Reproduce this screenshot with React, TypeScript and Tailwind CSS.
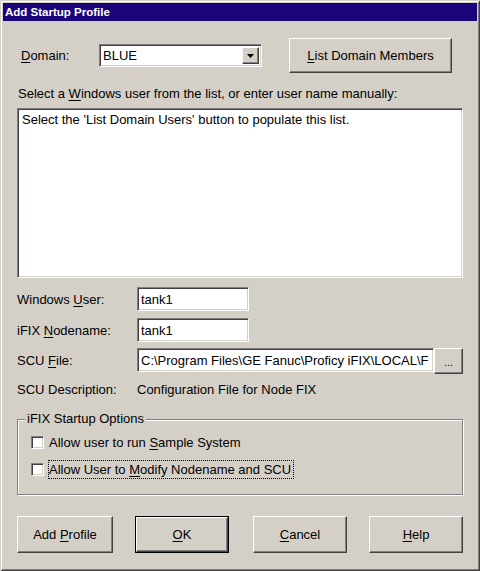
import React from "react";

const sunken =
  "border border-t-[#808080] border-l-[#808080] border-r-white border-b-white shadow-[inset_1px_1px_0_#404040,inset_-1px_-1px_0_#d4d0c8]";
const raised =
  "border border-t-white border-l-white border-r-[#404040] border-b-[#404040] shadow-[inset_-1px_-1px_0_#808080]";

function U({ children }: { children: React.ReactNode }) {
  return <span className="underline underline-offset-[2px]">{children}</span>;
}

function Button({
  children,
  w,
  def,
}: {
  children: React.ReactNode;
  w: string;
  def?: boolean;
}) {
  if (def) {
    return (
      <div className={`${w} h-[37px] border border-black`}>
        <div className={`w-full h-full flex items-center justify-center ${raised}`}>{children}</div>
      </div>
    );
  }
  return (
    <div className={`${w} h-[37px] flex items-center justify-center ${raised}`}>{children}</div>
  );
}

function Check() {
  return <div className={`w-[13px] h-[13px] bg-white shrink-0 ${sunken}`} />;
}

export default function App() {
  return (
    <div className="w-[480px] h-[571px] bg-[#d4d0c8] p-[3px] flex flex-col text-[13px] leading-[15px] text-black font-['Liberation_Sans',Arial,sans-serif] shadow-[inset_1px_1px_0_#d4d0c8,inset_-1px_-1px_0_#404040,inset_2px_2px_0_#ffffff,inset_-2px_-2px_0_#808080]">
      {/* Title bar */}
      <div className="h-[18px] bg-[#1b0479] flex items-center pl-[2px] text-white font-bold text-[11.5px]">
        Add Startup Profile
      </div>

      <div className="px-[14px] flex flex-col">
        {/* Domain row */}
        <div className="mt-[17px] h-[35px] flex items-center">
          <div className="w-[82px] pl-[4px]">
            <U>D</U>omain:
          </div>
          <div className={`w-[163px] h-[23px] bg-white flex items-stretch p-[2px] ${sunken}`}>
            <div className="flex-1 flex items-center pl-[1px]">BLUE</div>
            <div className={`w-[17px] flex items-center justify-center bg-[#d4d0c8] ${raised}`}>
              <svg width="7" height="4" viewBox="0 0 7 4">
                <path d="M0 0h7L3.5 4z" fill="#000" />
              </svg>
            </div>
          </div>
          <div className={`ml-[27px] w-[163px] h-[35px] flex items-center justify-center ${raised}`}>
            <span>
              <U>L</U>ist Domain Members
            </span>
          </div>
        </div>

        {/* List label */}
        <div className="mt-[13px] pl-[1px]">
          Select a <U>W</U>indows user from the list, or enter user name manually:
        </div>

        {/* Listbox */}
        <div className={`mt-[7px] h-[170px] bg-white pt-[3px] pl-[4px] ${sunken}`}>
          Select the 'List Domain Users' button to populate this list.
        </div>

        {/* Windows User */}
        <div className="mt-[9px] flex items-center">
          <div className="w-[120px]">
            Windows <U>U</U>ser:
          </div>
          <div className={`w-[112px] h-[24px] bg-white flex items-center pl-[3px] ${sunken}`}>tank1</div>
        </div>

        {/* Nodename */}
        <div className="mt-[7px] flex items-center">
          <div className="w-[120px]">
            iFIX <U>N</U>odename:
          </div>
          <div className={`w-[112px] h-[24px] bg-white flex items-center pl-[3px] ${sunken}`}>tank1</div>
        </div>

        {/* SCU File */}
        <div className="mt-[6px] flex items-start">
          <div className="w-[120px] h-[24px] flex items-center">
            <span>
              SCU <U>F</U>ile:
            </span>
          </div>
          <div
            className={`w-[297px] h-[24px] bg-white flex items-center pl-[3px] overflow-hidden whitespace-nowrap ${sunken}`}
          >
            {"C:\\Program Files\\GE Fanuc\\Proficy iFIX\\LOCAL\\F"}
          </div>
          <div className={`w-[29px] h-[26px] flex items-end justify-center pb-[5px] text-[11px] leading-[11px] ${raised}`}>
            ...
          </div>
        </div>

        {/* SCU Description */}
        <div className="mt-[8px] flex">
          <div className="w-[120px]">SCU Description:</div>
          <div>Configuration File for Node FIX</div>
        </div>

        {/* Group box */}
        <div className="mt-[22px] relative h-[76px] border border-[#808080] shadow-[1px_1px_0_#ffffff,inset_1px_1px_0_#ffffff] pt-[13px] pl-[13px] flex flex-col gap-[8px]">
          <div className="absolute left-[7px] top-[-9px] px-[2px] bg-[#d4d0c8]">iFIX Startup Options</div>
          <div className="h-[19px] flex items-center">
            <Check />
            <span className="ml-[4px] border border-transparent pr-[1px]">
              Allow user to run <U>S</U>ample System
            </span>
          </div>
          <div className="h-[19px] flex items-center">
            <Check />
            <span className="ml-[4px] border border-dotted border-black pr-[2px] py-[1px]">
              Allow User to <U>M</U>odify Nodename and SCU
            </span>
          </div>
        </div>

        {/* Bottom buttons */}
        <div className="mt-[21px] flex">
          <Button w="w-[96px]">
            <span>
              Add <U>P</U>rofile
            </span>
          </Button>
          <div className="ml-[22px]">
            <Button w="w-[94px]" def>
              <span>
                <U>O</U>K
              </span>
            </Button>
          </div>
          <div className="ml-[24px]">
            <Button w="w-[94px]">
              <span>
                <U>C</U>ancel
              </span>
            </Button>
          </div>
          <div className="ml-[22px]">
            <Button w="w-[94px]">
              <span>
                <U>H</U>elp
              </span>
            </Button>
          </div>
        </div>
      </div>
    </div>
  );
}
